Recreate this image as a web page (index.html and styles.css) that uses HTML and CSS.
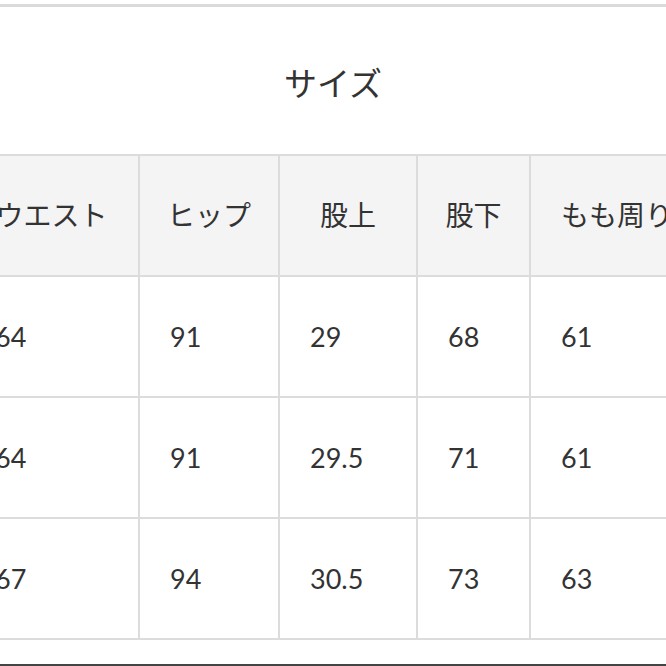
FILE: index.html
```html
<!DOCTYPE html>
<html lang="ja">
<head>
<meta charset="utf-8">
<link rel="stylesheet" href="styles.css">
</head>
<body>
<div class="page">
  <div class="topbar"></div>
  <div class="title">サイズ</div>
  <div class="table-wrap">
    <table class="size-table">
      <colgroup>
        <col class="c1"><col class="c2"><col class="c3"><col class="c4"><col class="c5">
      </colgroup>
      <thead>
        <tr><th>ウエスト</th><th>ヒップ</th><th>股上</th><th>股下</th><th>もも周り</th></tr>
      </thead>
      <tbody>
        <tr><td>64</td><td>91</td><td>29</td><td>68</td><td>61</td></tr>
        <tr><td>64</td><td>91</td><td>29.5</td><td>71</td><td>61</td></tr>
        <tr><td>67</td><td>94</td><td>30.5</td><td>73</td><td>63</td></tr>
      </tbody>
    </table>
  </div>
  <div class="spacer"></div>
  <div class="bottombar"></div>
</div>
</body>
</html>
```
FILE: styles.css
```css
html, body {
  margin: 0;
  padding: 0;
  background: #fff;
}
body {
  width: 666px;
  height: 666px;
  overflow: hidden;
  font-family: Lato, "Noto Sans CJK JP", sans-serif;
  color: #333;
}
.page {
  display: flex;
  flex-direction: column;
  height: 666px;
}
.topbar {
  margin-top: 4px;
  height: 3px;
  background: #dadada;
  flex: none;
}
.title {
  flex: none;
  height: 147px;
  display: flex;
  align-items: center;
  justify-content: center;
  font-family: "Noto Sans CJK JP", sans-serif;
  font-size: 33px;
  font-weight: 400;
  color: #333;
  padding-top: 2px;
  box-sizing: border-box;
}
.table-wrap {
  flex: none;
  margin-left: -37px;
}
.size-table {
  border-collapse: collapse;
  table-layout: fixed;
  width: 740px;
}
.c1 { width: 175px; }
.c2 { width: 140px; }
.c3 { width: 138px; }
.c4 { width: 113px; }
.c5 { width: 174px; }
.size-table th,
.size-table td {
  border: 2px solid #dcdcdc;
  vertical-align: middle;
  white-space: nowrap;
  font-weight: 400;
  color: #333;
}
.size-table th {
  height: 115px;
  padding: 0 0 4px 0;
  text-align: center;
  background: #f4f4f4;
  font-family: "Noto Sans CJK JP", sans-serif;
  font-size: 28px;
}
.size-table td {
  height: 119px;
  padding: 0 0 0 30px;
  text-align: left;
  font-family: Lato, sans-serif;
  font-size: 27px;
}
.spacer {
  flex: 1;
}
.bottombar {
  flex: none;
  height: 2px;
  background: #444;
}
```
